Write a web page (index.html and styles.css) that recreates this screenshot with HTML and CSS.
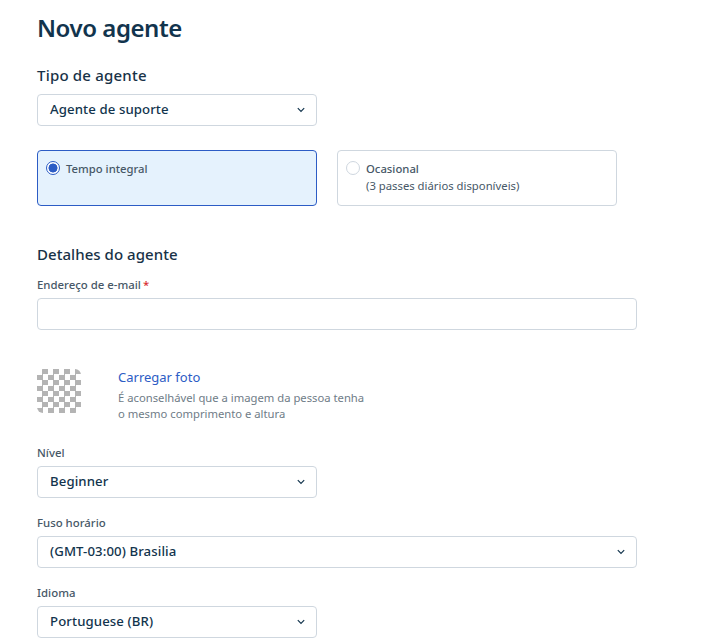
FILE: index.html
```html
<!DOCTYPE html>
<html lang="pt-BR">
<head>
<meta charset="utf-8">
<title>Novo agente</title>
<link rel="stylesheet" href="styles.css">
</head>
<body>
<main class="page">
  <h1 class="title">Novo agente</h1>
  <h2 class="section-label">Tipo de agente</h2>
  <div class="select narrow"><span>Agente de suporte</span>
    <svg class="chev" width="8" height="6" viewBox="0 0 8 6"><path d="M.8 1.2 4 4.4l3.2-3.2" fill="none" stroke="#12344d" stroke-width="1.2"/></svg>
  </div>
  <div class="cards">
    <div class="card active">
      <span class="radio on"></span>
      <div class="card-text"><div class="card-title">Tempo integral</div></div>
    </div>
    <div class="card">
      <span class="radio"></span>
      <div class="card-text"><div class="card-title">Ocasional</div><div class="card-sub">(3 passes diários disponíveis)</div></div>
    </div>
  </div>
  <h2 class="section-title">Detalhes do agente</h2>
  <label class="label email-label">Endereço de e-mail<span class="req">*</span></label>
  <div class="input"></div>
  <div class="photo">
    <div class="checker"></div>
    <div class="photo-text">
      <a class="link">Carregar foto</a>
      <p class="hint">É aconselhável que a imagem da pessoa tenha<br>o mesmo comprimento e altura</p>
    </div>
  </div>
  <label class="label">Nível</label>
  <div class="select narrow"><span>Beginner</span>
    <svg class="chev" width="8" height="6" viewBox="0 0 8 6"><path d="M.8 1.2 4 4.4l3.2-3.2" fill="none" stroke="#12344d" stroke-width="1.2"/></svg>
  </div>
  <label class="label spaced">Fuso horário</label>
  <div class="select wide"><span>(GMT-03:00) Brasilia</span>
    <svg class="chev" width="8" height="6" viewBox="0 0 8 6"><path d="M.8 1.2 4 4.4l3.2-3.2" fill="none" stroke="#12344d" stroke-width="1.2"/></svg>
  </div>
  <label class="label spaced">Idioma</label>
  <div class="select narrow"><span>Portuguese (BR)</span>
    <svg class="chev" width="8" height="6" viewBox="0 0 8 6"><path d="M.8 1.2 4 4.4l3.2-3.2" fill="none" stroke="#12344d" stroke-width="1.2"/></svg>
  </div>
</main>
</body>
</html>
```
FILE: styles.css
```css
* { box-sizing: border-box; }
html, body { margin: 0; height: 640px; overflow: hidden; background: #fff; }
body { font-family: "Noto Sans", "Open Sans", sans-serif; color: #12344d; }
.page { padding: 12px 0 0 37px; width: 712px; }
.title { margin: 0; font-size: 24px; line-height: 32px; font-weight: 600; letter-spacing: -.45px; color: #12344d; }
.section-label { margin: 21px 0 0; font-size: 15px; line-height: 20px; font-weight: 500; letter-spacing: .2px; color: #183247; }
.section-title { margin: 38px 0 0; font-size: 15px; line-height: 20px; font-weight: 500; letter-spacing: .05px; color: #183247; }
.select { display: flex; align-items: center; justify-content: space-between; height: 32px; padding: 0 11px 2px 12px; border: 1px solid #cfd7df; border-radius: 4px; background: #fff; font-size: 13.2px; font-weight: 500; letter-spacing: .1px; color: #12344d; }
.section-label + .select { margin-top: 9px; }
.narrow { width: 280px; }
.wide { width: 600px; }
.chev { flex: none; margin-top: 2px; }
.cards { display: flex; gap: 20px; margin-top: 24px; }
.card { display: flex; gap: 6px; width: 280px; height: 56px; padding: 10px 8px; border: 1px solid #cfd7df; border-radius: 4px; font-size: 11.3px; line-height: 17px; color: #475867; }
.card.active { background: #e5f2fd; border-color: #2c5cc5; }
.radio { flex: none; width: 14px; height: 14px; border: 1px solid #cfd7df; border-radius: 50%; background: #fff; }
.radio.on { border-color: #2c5cc5; background: radial-gradient(circle, #2c5cc5 0 4.2px, #fff 4.8px); }
.card-text { margin-top: -1px; }
.card-title { font-weight: 500; }
.card-sub { margin-top: 0; }
.label { display: block; font-size: 11.4px; line-height: 16px; font-weight: 500; color: #475867; }
.email-label { margin-top: 13px; margin-bottom: 5px; }
.req { margin-left: 2px; color: #d72d30; }
.input { width: 600px; height: 32px; border: 1px solid #cfd7df; border-radius: 4px; }
.photo { display: flex; gap: 37px; margin-top: 39px; margin-bottom: 23px; }
.checker { flex: none; width: 44px; height: 44px; border-radius: 6px; background-color: #fff; background-image: conic-gradient(#b4b4b4 25%, #fff 0 50%, #b4b4b4 0 75%, #fff 0); background-size: 11px 11px; filter: blur(.6px); }
.photo-text { margin-top: -1px; }
.link { display: block; font-size: 13px; line-height: 18px; color: #2c5cc5; }
.hint { margin: 4px 0 0; font-size: 11.25px; line-height: 16px; color: #6f7c87; }
.label + .select { margin-top: 5px; }
.spaced { margin-top: 17px; }
```
